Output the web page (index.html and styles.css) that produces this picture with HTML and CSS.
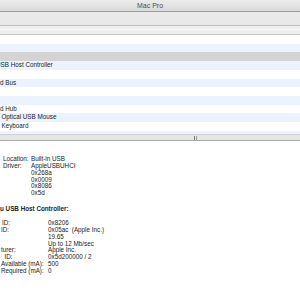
FILE: index.html
```html
<html lang="en"><head>
  <meta charset="UTF-8">
  <title>Mac Pro</title>
  <link rel="stylesheet" href="styles.css">
</head>
<body>
  <div class="titlebar">Mac Pro</div>
  <div class="toolbar"></div>
  <div class="colhead"></div>

  <div class="tree">
    <div class="row"><span class="name"></span></div>
    <div class="row"><span class="name"></span></div>
    <div class="row selected"><span class="name"></span></div>
    <div class="row"><span class="name at-host">USB Host Controller</span></div>
    <div class="row"><span class="name"></span></div>
    <div class="row"><span class="name at-bus">USB High-Speed Bus</span></div>
    <div class="row"><span class="name"></span></div>
    <div class="row"><span class="name"></span></div>
    <div class="row"><span class="name at-hub">Keyboard Hub</span></div>
    <div class="row"><span class="name at-dev">Apple Optical USB Mouse</span></div>
    <div class="row"><span class="name at-dev">Apple Keyboard</span></div>
    <div class="row"><span class="name"></span></div>
  </div>

  <div class="splitter">
    <svg class="grip" width="4" height="4" viewBox="0 0 4 4">
      <rect x="0" y="0" width="1" height="4" fill="#777"></rect>
      <rect x="2" y="0" width="1" height="4" fill="#999"></rect>
    </svg>
  </div>

  <div class="details">
    <div class="group first">
      <span class="label">Location:</span><span>Built-in USB</span>
      <span class="label">Driver:</span><span>AppleUSBUHCI</span>
      <span class="label"></span><span>0x268a</span>
      <span class="label"></span><span>0x0009</span>
      <span class="label"></span><span>0x8086</span>
      <span class="label"></span><span>0x5d</span>
    </div>

    <div class="heading"><span class="cut">u USB Host Controller:</span></div>

    <div class="group second">
      <span class="label">ID:</span><span>0x8206</span>
      <span class="label"><span class="cut">ID:</span></span><span>0x05ac &nbsp;(Apple Inc.)</span>
      <span class="label"></span><span>19.65</span>
      <span class="label"></span><span>Up to 12 Mb/sec</span>
      <span class="label"><span class="cut">turer:</span></span><span>Apple Inc.</span>
      <span class="label"><span class="push">ID:</span></span><span>0x5d200000 / 2</span>
      <span class="label"><span class="cut">Available (mA):</span></span><span>500</span>
      <span class="label"><span class="cut">Required (mA):</span></span><span>0</span>
    </div>
  </div>
</body></html>
```

FILE: styles.css
```css
body {
  margin: 0;
  width: 300px;
  height: 300px;
  overflow: hidden;
  background: #fff;
  font-family: "Liberation Sans", Arial, sans-serif;
  font-size: 6.3px;
  color: #222;
}
.titlebar {
  height: 11px;
  line-height: 11px;
  text-align: center;
  font-size: 7px;
  color: #4c4c4c;
  background: linear-gradient(#ececec, #d9d9d9);
  border-bottom: 1px solid #9c9c9c;
}
.toolbar {
  height: 13px;
  background: #e9e9e9;
  border-bottom: 1px solid #bfbfbf;
}
.colhead {
  height: 8px;
  background: linear-gradient(#eeeeee 0 3px, #fbfbfb 3px 4px, #ededed 4px);
  border-bottom: 1px solid #c6c6c6;
}
.tree {
  height: 99px;
  overflow: hidden;
}
.row {
  height: 8.73px;
  line-height: 8.73px;
  white-space: nowrap;
  background: #fff;
}
.row:nth-child(even) {
  background: #edf3fe;
}
.row.selected {
  background: #d4d4d4;
}
.name {
  display: inline-block;
}
.at-host { margin-left: -4px; }
.at-bus { margin-left: -44.5px; }
.at-hub { margin-left: -23.5px; }
.at-dev { margin-left: -16.4px; }
.splitter {
  height: 5px;
  background: #e6e6e6;
  border-top: 1px solid #d0d0d0;
  border-bottom: 1px solid #a9a9a9;
  display: flex;
  align-items: center;
  padding-left: 194px;
}
.grip {
  display: block;
}
.details {
  padding-top: 15px;
  line-height: 6.85px;
  white-space: nowrap;
}
.group {
  display: grid;
  grid-template-columns: 28px auto;
  justify-content: start;
}
.group.first {
  padding-left: 3px;
}
.group.second {
  grid-template-columns: 48px auto;
  margin-top: 7.2px;
}
.label {
  overflow: hidden;
}
.heading {
  margin-top: 9px;
  font-weight: bold;
  overflow: hidden;
}
.cut {
  display: inline-block;
}
.group.second .label {
  padding-left: 2px;
}
.group.second .label .cut {
  margin-left: -1px;
}
.push {
  display: inline-block;
  margin-left: 2.5px;
}
```
